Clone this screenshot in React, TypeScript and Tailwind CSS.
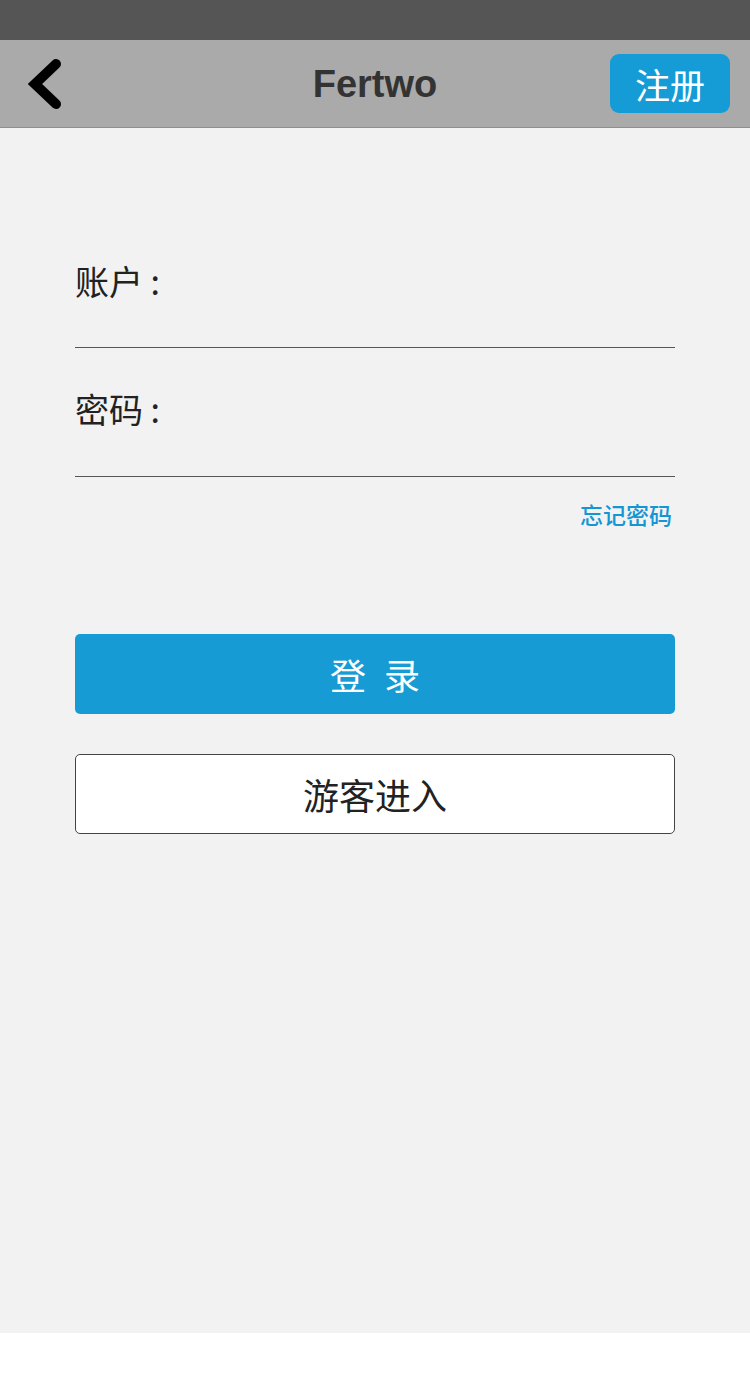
export default function App() {
  const cjk = { fontFamily: '"Noto Sans CJK SC", "Liberation Sans", sans-serif' };
  return (
    <div className="w-[750px] bg-white" style={cjk}>
      {/* status bar */}
      <div className="h-[40px] bg-[#555555]" />

      {/* header */}
      <div className="relative flex h-[88px] items-center justify-center border-b border-[#8f8f8f] bg-[#aaaaaa]">
        <button className="absolute left-[20px] top-[14px] h-[60px] w-[50px]">
          <svg width="50" height="60" viewBox="0 0 50 60">
            <path d="M36 10 L15 30 L36 50" fill="none" stroke="#000" strokeWidth="10" strokeLinejoin="miter" strokeLinecap="round" />
          </svg>
        </button>
        <h1
          className="text-[38px] font-bold leading-none text-[#333333]"
          style={{ fontFamily: '"Liberation Sans", Arial, sans-serif' }}
        >
          Fertwo
        </h1>
        <button className="absolute right-[20px] top-[14px] flex h-[59px] w-[120px] items-center justify-center rounded-[9px] bg-[#159bd6] text-[35px] leading-none text-white">
          注册
        </button>
      </div>

      {/* content */}
      <div className="h-[1205px] bg-[#f2f2f2] px-[75px] pt-[130px]">
        <div className="flex h-[90px] items-start border-b border-[#555555]">
          <span className="text-[34px] leading-[46px] text-[#222222]">账户 :</span>
        </div>
        <div className="flex h-[129px] items-start border-b border-[#555555] pt-[38px]">
          <span className="text-[34px] leading-[46px] text-[#222222]">密码 :</span>
        </div>
        <div className="flex justify-end pt-[22px] pr-[3px]">
          <span className="text-[23px] font-medium leading-[30px] text-[#1596d4]">忘记密码</span>
        </div>

        <button className="mt-[105px] flex h-[80px] w-full items-center justify-center rounded-[5px] bg-[#169bd5] text-[36px] tracking-[0.5em] text-white">
          <span className="pl-[0.5em]">登录</span>
        </button>
        <button className="mt-[40px] flex h-[80px] w-full items-center justify-center rounded-[5px] border border-[#444444] bg-white text-[36px] text-[#222222]">
          游客进入
        </button>
      </div>
      <div className="h-[45px] bg-white" />
    </div>
  );
}
